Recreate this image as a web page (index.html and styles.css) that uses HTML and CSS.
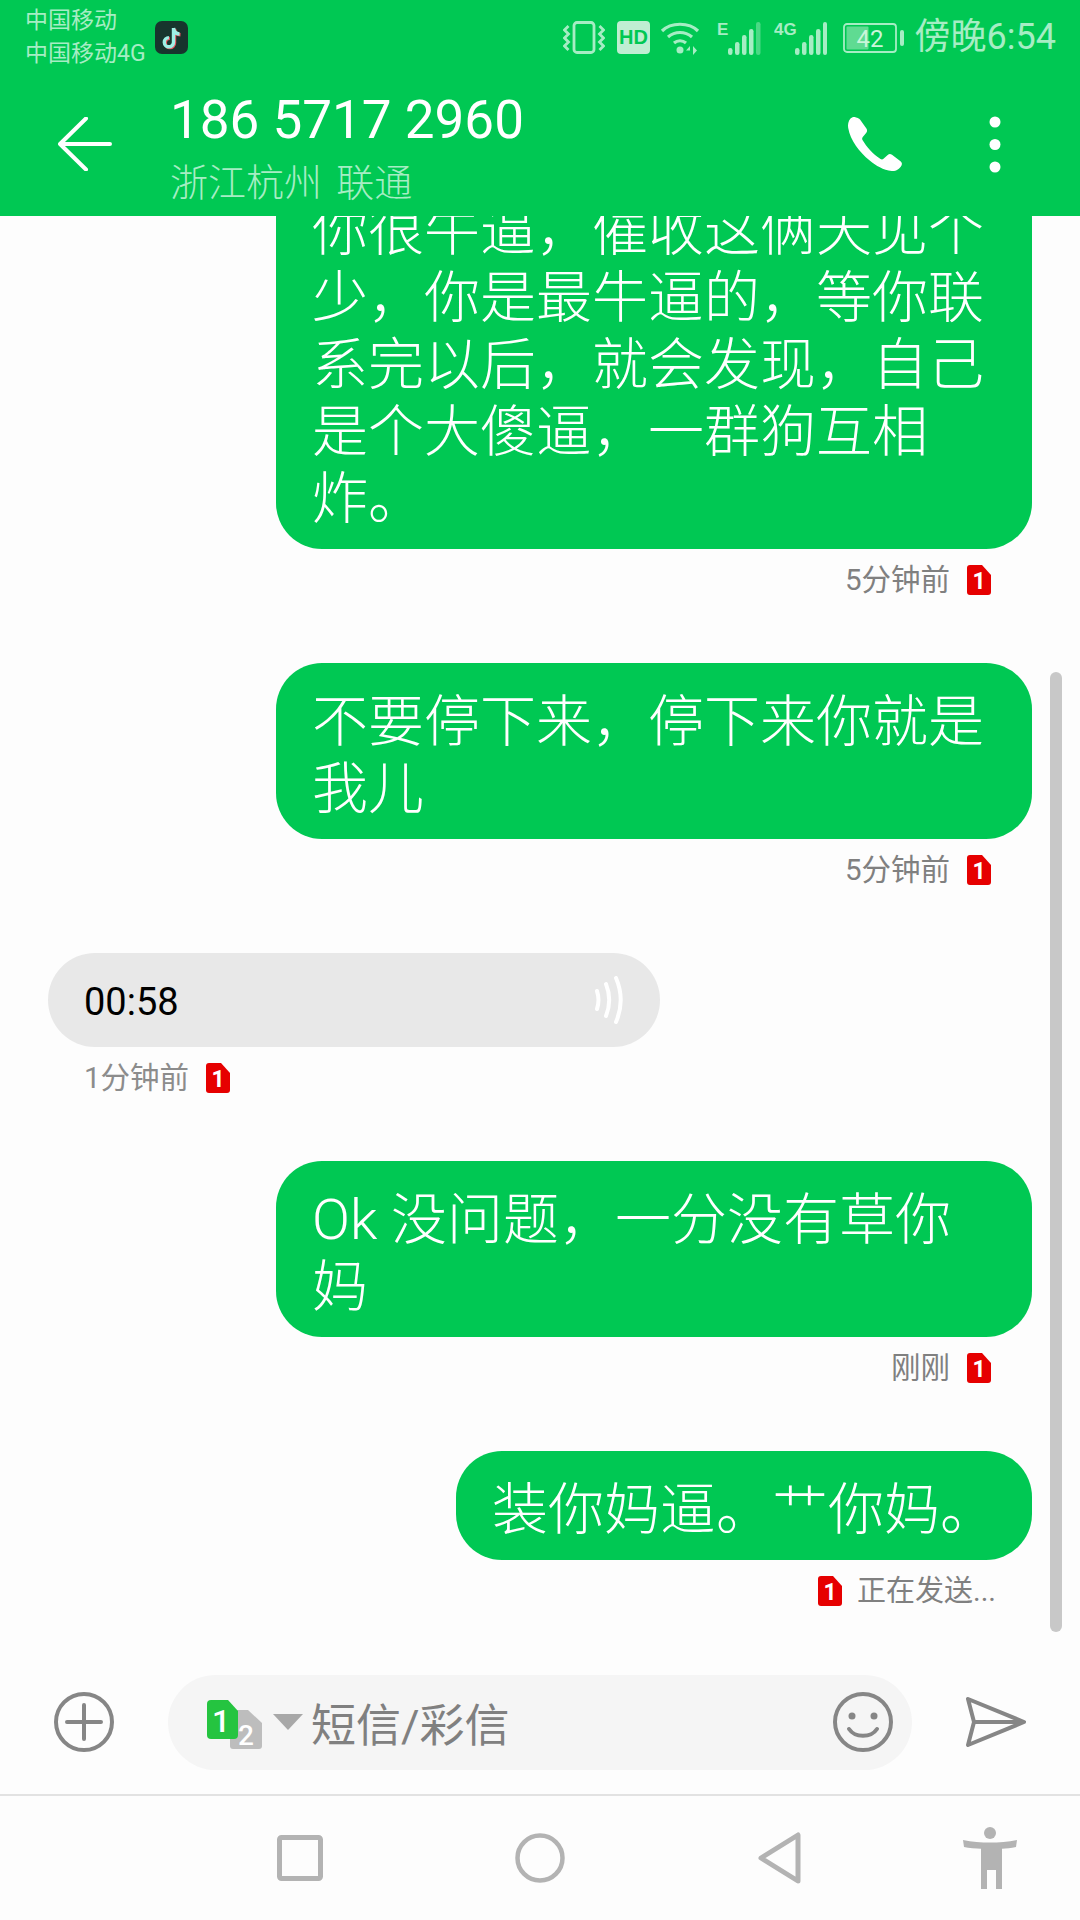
FILE: index.html
```html
<!DOCTYPE html>
<html lang="zh-CN">
<head>
<meta charset="utf-8">
<title>短信</title>
<link rel="stylesheet" href="styles.css">
</head>
<body>
<div class="screen">
  <header class="header">
    <div class="status">
      <div class="carriers"><div>中国移动</div><div>中国移动4G</div></div>
      <svg class="tiktok" viewBox="0 0 33 33">
        <rect width="33" height="33" rx="7" fill="#17352d"/>
        <path d="M18.5 7v14.2a4.6 4.6 0 1 1-4.6-4.6M18.5 7c.3 3.6 2.6 5.8 6 6" fill="none" stroke="#e8505b" stroke-width="3.4" transform="translate(1 .8)"/>
        <path d="M18.5 7v14.2a4.6 4.6 0 1 1-4.6-4.6M18.5 7c.3 3.6 2.6 5.8 6 6" fill="none" stroke="#9ef0e6" stroke-width="3.4"/>
      </svg>
      <div class="status-right">
        <svg class="st-vib" viewBox="0 0 42 33" fill="none" stroke="#a6edc4" stroke-width="2.8">
          <rect x="11" y="1.500" width="20" height="30" rx="3"/>
          <path d="M5.500 5 1.500 9l4 4-4 4 4 4-4 4 4 4M36.500 5l4 4-4 4 4 4-4 4 4 4-4 4"/>
        </svg>
        <svg class="st-hd" viewBox="0 0 33 33">
          <rect width="33" height="33" rx="4" fill="#bfeed2"/>
          <text x="16.500" y="23" text-anchor="middle" class="st-hd-text">HD</text>
        </svg>
        <svg class="st-wifi" viewBox="0 0 40 34" fill="none" stroke="#a6edc4" stroke-width="3.200">
          <path d="M2 10C11 1 29 1 38 10M8 16c7-6 17-6 24 0M14 22c3.500-3 8.500-3 12 0"/>
          <circle cx="20" cy="29" r="3.500" fill="#a6edc4" stroke="none"/>
          <path d="M30 25l-4 4.500h4zM33 25v9l4-4.500z" fill="#a6edc4" stroke="none"/>
        </svg>
        <svg class="st-sig" viewBox="0 0 46 34">
          <text x="0" y="14" class="st-small">E</text>
          <rect x="11" y="27" width="4.500" height="7" rx="2.200" fill="#a6edc4"/>
          <rect x="18" y="21" width="4.500" height="13" rx="2.200" fill="#a6edc4"/>
          <rect x="25" y="14" width="4.500" height="20" rx="2.200" fill="#a6edc4"/>
          <rect x="32" y="8" width="4.500" height="26" rx="2.200" fill="#a6edc4"/>
          <rect x="39" y="1" width="4.500" height="33" rx="2.200" fill="#a6edc4" opacity=".45"/>
        </svg>
        <svg class="st-sig4" viewBox="0 0 53 34">
          <text x="0" y="14" class="st-small">4G</text>
          <rect x="21" y="27" width="4.500" height="7" rx="2.200" fill="#a6edc4"/>
          <rect x="28" y="21" width="4.500" height="13" rx="2.200" fill="#a6edc4"/>
          <rect x="35" y="14" width="4.500" height="20" rx="2.200" fill="#a6edc4"/>
          <rect x="42" y="8" width="4.500" height="26" rx="2.200" fill="#a6edc4"/>
          <rect x="49" y="1" width="4" height="33" rx="2" fill="#a6edc4"/>
        </svg>
        <svg class="st-bat" viewBox="0 0 61 30">
          <rect x="1" y="1" width="52" height="28" rx="3" fill="none" stroke="#a6edc4" stroke-width="1.800"/>
          <rect x="3.500" y="3.500" width="22" height="23" rx="1" fill="#5fdb92"/>
          <rect x="57" y="7" width="4" height="16" rx="2" fill="#a6edc4"/>
          <text x="27" y="24" text-anchor="middle" class="st-bat-text">42</text>
        </svg>
        <span class="clock">傍晚6:54</span>
      </div>
    </div>
    <div class="appbar">
      <svg class="back" viewBox="0 0 54 54" fill="none" stroke="#fff" stroke-width="4" stroke-linecap="round" stroke-linejoin="round">
        <path d="M28 1.500 2 27l26 25.500M2 27h50"/>
      </svg>
      <div class="title">
        <div class="number">186 5717 2960</div>
        <div class="location">浙江杭州 联通</div>
      </div>
      <svg class="phone" viewBox="0 0 56 56">
        <path fill="#fff" d="M9 1.500c-2-1-4-.4-5.500 1C1.300 5 .6 8.500 1.200 12c2.300 12.500 11 24 21.500 32.500 6.500 5.300 13.500 9.500 22 10.500 4 .5 7.800-2 9.800-5.500.8-1.600.5-3.200-1-4.300l-8.500-6.500c-1.500-1-3-1-4.300.3l-4.200 3.800c-.9.800-2 .8-3 .2C26 38 19.500 31 15.500 24c-.6-1-.4-2 .3-2.900l3.500-4.300c1-1.300 1-2.800.1-4.200L13 3.500C12 2.300 10.500 2 9 1.500z"/>
      </svg>
      <svg class="more" viewBox="0 0 12 57">
        <circle cx="6" cy="6" r="5.500" fill="#fff"/>
        <circle cx="6" cy="28.500" r="5.500" fill="#fff"/>
        <circle cx="6" cy="51" r="5.500" fill="#fff"/>
      </svg>
    </div>
  </header>

  <main class="messages">
    <div class="scrollbar"></div>

    <div class="msg msg-out">
      <div class="bubble">你很牛逼，催收这俩天见个少，你是最牛逼的，等你联系完以后，就会发现，自己是个大傻逼，一群狗互相炸。</div>
      <div class="meta"><span>5分钟前</span><svg class="sim" viewBox="0 0 24 30"><path d="M3 0h12l9 10v17a3 3 0 0 1-3 3H3a3 3 0 0 1-3-3V3a3 3 0 0 1 3-3z" fill="#e60000"/><text x="12" y="24" text-anchor="middle" class="sim-text">1</text></svg></div>
    </div>

    <div class="msg msg-out">
      <div class="bubble">不要停下来，停下来你就是我儿</div>
      <div class="meta"><span>5分钟前</span><svg class="sim" viewBox="0 0 24 30"><path d="M3 0h12l9 10v17a3 3 0 0 1-3 3H3a3 3 0 0 1-3-3V3a3 3 0 0 1 3-3z" fill="#e60000"/><text x="12" y="24" text-anchor="middle" class="sim-text">1</text></svg></div>
    </div>

    <div class="msg msg-in">
      <div class="voice">
        <span class="voice-time">00:58</span>
        <svg class="waves" viewBox="0 0 30 48" fill="none" stroke="#fff" stroke-width="4" stroke-linecap="round">
          <path d="M3 15c2 6 2 12 0 18M12 8c4 10 4 22 0 32M22 2c6 14 6 30 0 44"/>
        </svg>
      </div>
      <div class="meta meta-in"><span>1分钟前</span><svg class="sim" viewBox="0 0 24 30"><path d="M3 0h12l9 10v17a3 3 0 0 1-3 3H3a3 3 0 0 1-3-3V3a3 3 0 0 1 3-3z" fill="#e60000"/><text x="12" y="24" text-anchor="middle" class="sim-text">1</text></svg></div>
    </div>

    <div class="msg msg-out">
      <div class="bubble">Ok 没问题，一分没有草你妈</div>
      <div class="meta"><span>刚刚</span><svg class="sim" viewBox="0 0 24 30"><path d="M3 0h12l9 10v17a3 3 0 0 1-3 3H3a3 3 0 0 1-3-3V3a3 3 0 0 1 3-3z" fill="#e60000"/><text x="12" y="24" text-anchor="middle" class="sim-text">1</text></svg></div>
    </div>

    <div class="msg msg-out msg-last">
      <div class="bubble">装你妈逼。艹你妈。</div>
      <div class="meta meta-sending"><svg class="sim" viewBox="0 0 24 30"><path d="M3 0h12l9 10v17a3 3 0 0 1-3 3H3a3 3 0 0 1-3-3V3a3 3 0 0 1 3-3z" fill="#e60000"/><text x="12" y="24" text-anchor="middle" class="sim-text">1</text></svg><span>正在发送...</span></div>
    </div>
  </main>

  <section class="compose">
    <svg class="ic-round" viewBox="0 0 60 60" fill="none" stroke="#868686" stroke-width="4" stroke-linecap="round">
      <circle cx="30" cy="30" r="28"/>
      <path d="M30 13v34M13 30h34"/>
    </svg>
    <div class="input">
      <svg class="simpick" viewBox="0 0 56 52">
        <path d="M26 10h15l14 13v23a3 3 0 0 1-3 3H26a3 3 0 0 1-3-3V13a3 3 0 0 1 3-3z" fill="#bdbdbd"/>
        <text x="39" y="45" text-anchor="middle" class="simpick-two">2</text>
        <path d="M4 0h17l10 11v24a4 4 0 0 1-4 4H4a4 4 0 0 1-4-4V4a4 4 0 0 1 4-4z" fill="#25c440"/>
        <text x="14" y="32" text-anchor="middle" class="simpick-one">1</text>
      </svg>
      <svg class="caret" viewBox="0 0 30 16"><path d="M0 0h30L15 16z" fill="#a8a8a8"/></svg>
      <span class="placeholder">短信/彩信</span>
      <svg class="ic-round smile" viewBox="0 0 60 60" fill="none" stroke="#868686" stroke-width="4" stroke-linecap="round">
        <circle cx="30" cy="30" r="28"/>
        <circle cx="19" cy="24" r="3.500" fill="#868686" stroke="none"/>
        <circle cx="41" cy="24" r="3.500" fill="#868686" stroke="none"/>
        <path d="M16 37c6 9 22 9 28 0"/>
      </svg>
    </div>
    <svg class="send" viewBox="0 0 60 50" fill="none" stroke="#868686" stroke-width="4" stroke-linejoin="round">
      <path d="M2 2 58 25 2 48l6-23zM8 25h50"/>
    </svg>
  </section>

  <nav class="nav">
    <svg class="nav-square" viewBox="0 0 46 46" fill="none" stroke="#b3b3b3" stroke-width="5"><rect x="2.500" y="2.500" width="41" height="41" rx="2"/></svg>
    <svg class="nav-circle" viewBox="0 0 50 50" fill="none" stroke="#b3b3b3" stroke-width="4.500"><circle cx="25" cy="25" r="22.500"/></svg>
    <svg class="nav-back" viewBox="0 0 44 52" fill="none" stroke="#b3b3b3" stroke-width="5" stroke-linejoin="round"><path d="M40 3v46L3 26z"/></svg>
    <svg class="nav-person" viewBox="0 0 54 62" fill="#b3b3b3">
      <circle cx="27" cy="6" r="6"/>
      <path d="M0 13c9 2 18 2.500 27 2.500S45 15 54 13l-1 7c-5 1-10 1.500-14 1.800V62h-6V43h-3.500H24v19h-6V21.800C13 21.500 6 21 1 20z"/>
    </svg>
  </nav>
</div>
</body>
</html>
```

FILE: styles.css
```css
* { box-sizing: border-box; }
html, body { margin: 0; padding: 0; }
body { background: #fdfdfd; font-family: Roboto, "Noto Sans CJK SC", sans-serif; }
svg { display: block; flex: none; }

.screen { width: 1080px; height: 1920px; display: flex; flex-direction: column; overflow: hidden; background: #fdfdfd; }

.header { height: 216px; background: #00c853; color: #fff; flex: none; position: relative; z-index: 2; }
.status { height: 72px; display: flex; align-items: flex-start; padding: 4px 24px 0 25px; }
.carriers { font-size: 23px; line-height: 33px; color: #a6edc4; }
.tiktok { width: 33px; height: 33px; margin: 17px 0 0 9px; }
.status-right { margin-left: auto; display: flex; align-items: center; height: 33px; margin-top: 17px; }
.st-vib { width: 42px; height: 33px; }
.st-hd { width: 33px; height: 33px; margin-left: 12px; }
.st-hd-text { font: 700 20px "Liberation Sans", sans-serif; fill: #00c853; }
.st-wifi { width: 40px; height: 34px; margin-left: 10px; }
.st-sig { width: 46px; height: 34px; margin-left: 17px; }
.st-sig4 { width: 53px; height: 34px; margin-left: 11px; }
.st-small { font: 700 17px "Liberation Sans", sans-serif; fill: #a6edc4; }
.st-bat { width: 61px; height: 30px; margin-left: 16px; }
.st-bat-text { font: 400 24px Roboto, sans-serif; fill: #c9f5da; }
.clock { font-size: 36px; line-height: 33px; color: #a6edc4; margin-left: 11px; white-space: nowrap; }

.appbar { height: 144px; display: flex; align-items: center; }
.back { width: 54px; height: 54px; margin-left: 58px; margin-top: 0; }
.title { margin-left: 58px; flex: 1; padding-top: 7px; }
.number { font-size: 53px; line-height: 62px; white-space: nowrap; }
.location { font-size: 38px; line-height: 46px; color: #a6edc4; margin-top: 9px; word-spacing: 5px; font-weight: 300; }
.phone { width: 56px; height: 56px; margin-right: 86px; }
.more { width: 12px; height: 57px; margin-right: 79px; }

.messages { flex: 1; min-height: 0; display: flex; flex-direction: column; justify-content: flex-end; overflow: hidden; position: relative; padding-bottom: 44px; }
.scrollbar { position: absolute; right: 18px; bottom: 18px; width: 12px; height: 960px; background: #c8c8c8; border-radius: 6px; }

.msg { flex: none; display: flex; flex-direction: column; margin-bottom: 68px; }
.msg-out { align-items: flex-end; padding-right: 48px; }
.msg-in { align-items: flex-start; padding-left: 48px; }
.msg-last { margin-bottom: 0; }

.bubble { max-width: 756px; background: #00c853; color: #fff; font-size: 56px; line-height: 67px; font-weight: 300; padding: 26px 36px 16px; border-radius: 46px; }
.msg-out:not(.msg-last) .bubble { width: 756px; }

.voice { width: 612px; height: 94px; border-radius: 47px; background: #e8e8e8; display: flex; align-items: center; justify-content: space-between; padding: 0 36px; font-size: 38px; color: #000; }
.voice-time { padding-top: 3px; }
.waves { width: 30px; height: 48px; }

.meta { height: 30px; margin-top: 16px; margin-right: 41px; display: flex; align-items: center; gap: 17px; font-size: 29.500px; line-height: 30px; color: #808080; }
.meta-in { margin: 16px 0 0 36px; gap: 17px; color: #8c8c8c; }
.meta-sending { margin-right: 36px; gap: 15px; font-size: 29px; }
.sim { width: 24px; height: 30px; }
.sim-text { font: 700 23px Roboto, sans-serif; fill: #fff; }

.compose { height: 146px; flex: none; display: flex; align-items: center; padding: 0 54px 0 54px; border-bottom: 2px solid #e2e2e2; }
.ic-round { width: 60px; height: 60px; }
.input { width: 744px; height: 95px; margin-left: 54px; border-radius: 48px; background: #f5f5f5; display: flex; align-items: center; padding: 0 19px 0 39px; }
.simpick { width: 56px; height: 52px; margin-top: 8px; }
.simpick-one { font: 500 32px "Roboto", sans-serif; fill: #fff; }
.simpick-two { font: 500 28px "Roboto", sans-serif; fill: #fff; }
.caret { width: 30px; height: 16px; margin-left: 10px; }
.placeholder { font-size: 45px; color: #808080; margin-left: 8px; }
.smile { margin-left: auto; }
.send { width: 60px; height: 50px; margin-left: 54px; }

.nav { height: 124px; flex: none; display: grid; grid-template-columns: 240px 240px 240px 180px; padding-left: 180px; justify-items: center; align-items: center; }
.nav-square { width: 46px; height: 46px; }
.nav-circle { width: 50px; height: 50px; }
.nav-back { width: 44px; height: 52px; }
.nav-person { width: 54px; height: 62px; }
```
